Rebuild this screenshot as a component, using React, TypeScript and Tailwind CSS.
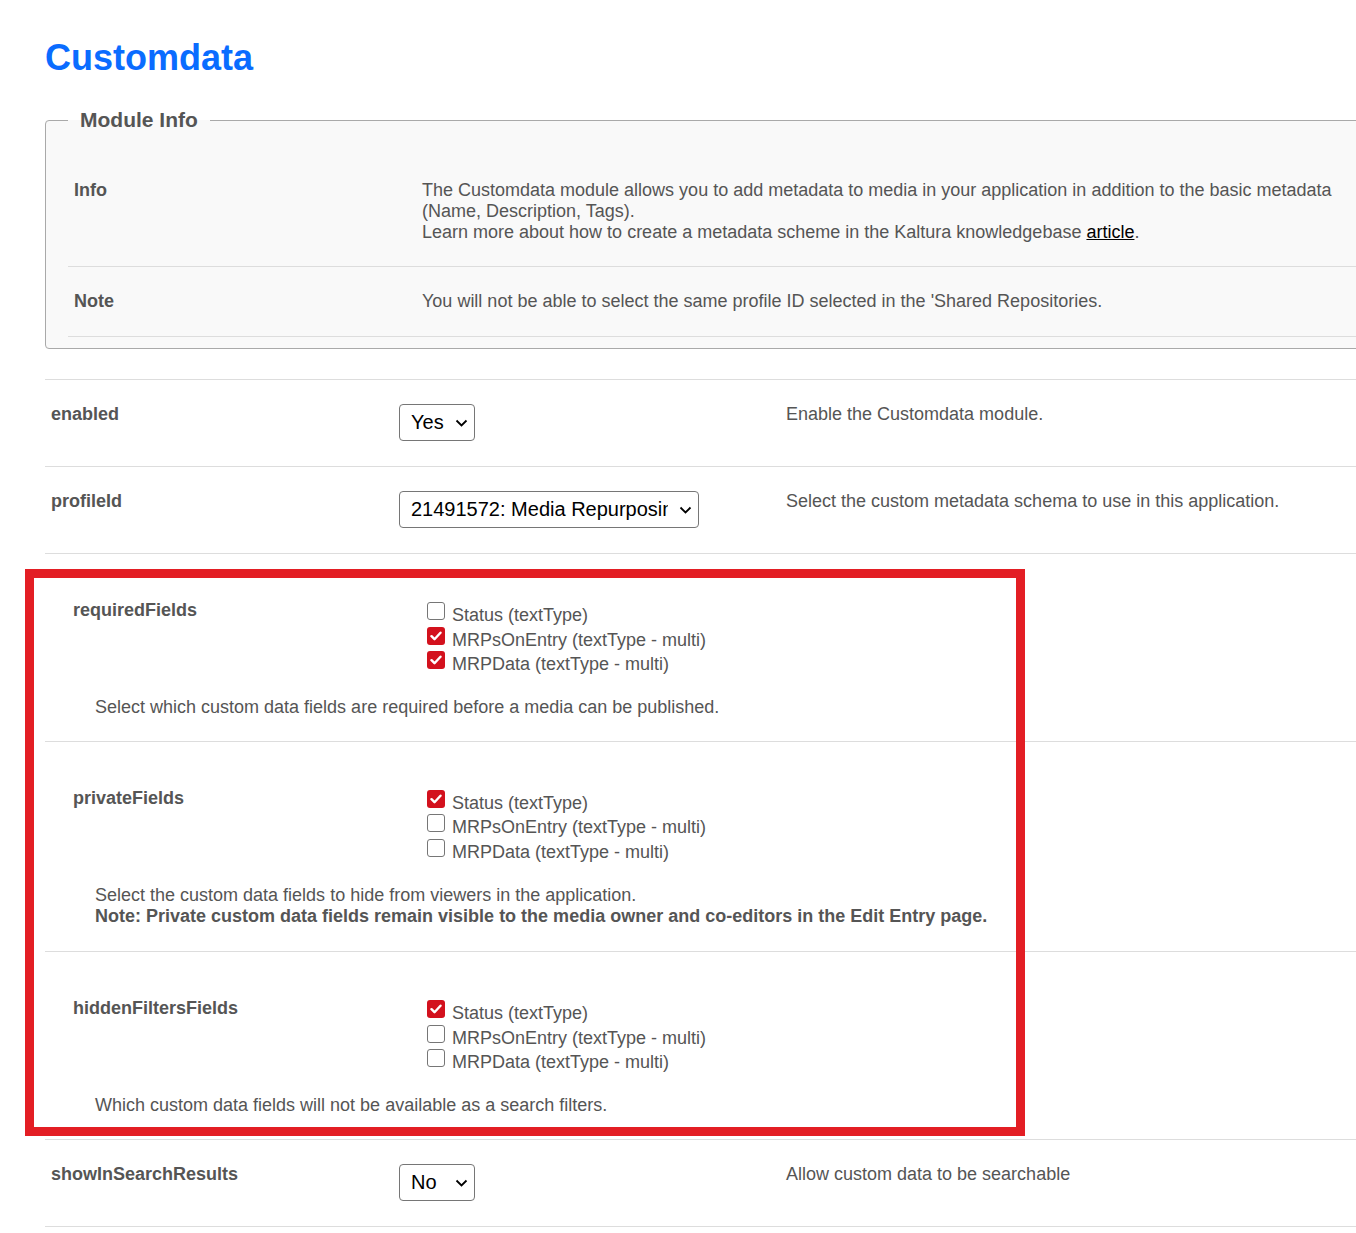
import type { ReactNode } from "react";

const fields = ["Status (textType)", "MRPsOnEntry (textType - multi)", "MRPData (textType - multi)"];

function Chevron() {
  return (
    <svg width="13" height="8" viewBox="0 0 13 8" className="pointer-events-none absolute right-[7px] top-[15px]">
      <path d="M1.5 1.5l5 5 5-5" fill="none" stroke="#000" strokeWidth="1.8" />
    </svg>
  );
}

function Select({ value, options, width }: { value: string; options: string[]; width: string }) {
  return (
    <div className={"relative " + width}>
      <select
        defaultValue={value}
        className="h-[37px] w-full appearance-none rounded-[4px] border border-[#767676] bg-white pl-[11px] pr-[30px] text-[20px] leading-[23px] text-black"
      >
        {options.map((o) => (
          <option key={o}>{o}</option>
        ))}
      </select>
      <Chevron />
    </div>
  );
}

function Box({ checked }: { checked: boolean }) {
  if (checked) {
    return (
      <span className="mt-[-1px] flex h-[18px] w-[18px] shrink-0 items-center justify-center rounded-[3px] bg-[#d3111d]">
        <svg width="12" height="10" viewBox="0 0 12 10">
          <path d="M1.5 5.2l3 3 6-6.5" fill="none" stroke="#fff" strokeWidth="2.4" strokeLinecap="round" strokeLinejoin="round" />
        </svg>
      </span>
    );
  }
  return <span className="mt-[-1px] h-[18px] w-[18px] shrink-0 rounded-[3px] border border-[#767676] bg-white" />;
}

function SettingRow({ label, desc, children }: { label: string; desc: string; children: ReactNode }) {
  return (
    <div className="flex border-b border-[#dddddd] pt-[24px] pb-[25px]">
      <div className="w-[354px] shrink-0 pl-[6px] font-bold">{label}</div>
      <div className="w-[387px] shrink-0">{children}</div>
      <div className="flex-1">{desc}</div>
    </div>
  );
}

function FieldRow({ label, checked, wide, children }: { label: string; checked: boolean[]; wide?: boolean; children: ReactNode }) {
  return (
    <div className={"border-b border-[#dddddd] pt-[46px] " + (wide ? "pb-[24px]" : "pb-[23px]")}>
      <div className="flex">
        <div className="w-[382px] shrink-0 pl-[28px] font-bold">{label}</div>
        <div className="pt-[3px]">
          {fields.map((f, i) => (
            <label key={f} className="flex h-[24.5px] items-start gap-[7px]">
              <Box checked={checked[i]} />
              <span className="leading-[24.5px]">{f}</span>
            </label>
          ))}
        </div>
      </div>
      <div className={"pl-[50px] " + (wide ? "mt-[21px]" : "mt-[20px]")}>{children}</div>
    </div>
  );
}

export default function App() {
  return (
    <div className="min-h-[1233px] overflow-hidden bg-white pl-[45px] pt-[37px] pb-[10px] font-['Liberation_Sans',Arial,sans-serif] text-[18px] leading-[21px] text-[#555555]">
      <h1 className="text-[36px] font-bold leading-[41px] text-[#0a6cff]">Customdata</h1>

      {/* Module Info */}
      <fieldset className="mt-[30px] w-[1340px] rounded-[4px] border border-[#a9a9a9] bg-[#f9f9f9] pl-[22px] pt-[24px] pb-[11px]">
        <legend className="px-[12px] text-[21px] font-bold leading-[24px] text-[#555555]">Module Info</legend>
        <div className="flex border-b border-[#dddddd] pt-[24px] pb-[23px]">
          <div className="w-[354px] shrink-0 pl-[6px] font-bold">Info</div>
          <div className="max-w-[928px]">
            The Customdata module allows you to add metadata to media in your application in addition to the basic metadata (Name, Description, Tags).
            <br />
            Learn more about how to create a metadata scheme in the Kaltura knowledgebase{" "}
            <a href="#" className="text-black underline">
              article
            </a>
            .
          </div>
        </div>
        <div className="flex border-b border-[#dddddd] pt-[24px] pb-[24px]">
          <div className="w-[354px] shrink-0 pl-[6px] font-bold">Note</div>
          <div>You will not be able to select the same profile ID selected in the 'Shared Repositories.</div>
        </div>
      </fieldset>

      <div className="mt-[30px] border-t border-[#dddddd]">
        <SettingRow label="enabled" desc="Enable the Customdata module.">
          <Select value="Yes" options={["Yes", "No"]} width="w-[76px]" />
        </SettingRow>
        <SettingRow label="profileId" desc="Select the custom metadata schema to use in this application.">
          <Select value="21491572: Media Repurposing" options={["21491572: Media Repurposing"]} width="w-[300px]" />
        </SettingRow>

        <div className="relative">
          <FieldRow label="requiredFields" checked={[false, true, true]}>
            Select which custom data fields are required before a media can be published.
          </FieldRow>
          <FieldRow label="privateFields" checked={[true, false, false]} wide>
            Select the custom data fields to hide from viewers in the application.
            <br />
            <b>Note: Private custom data fields remain visible to the media owner and co-editors in the Edit Entry page.</b>
          </FieldRow>
          <FieldRow label="hiddenFiltersFields" checked={[true, false, false]}>
            Which custom data fields will not be available as a search filters.
          </FieldRow>
          {/* highlight annotation */}
          <div className="pointer-events-none absolute left-[-20px] top-[15px] h-[567px] w-[1000px] border-[9px] border-[#e31e24]" />
        </div>

        <SettingRow label="showInSearchResults" desc="Allow custom data to be searchable">
          <Select value="No" options={["Yes", "No"]} width="w-[76px]" />
        </SettingRow>
      </div>
    </div>
  );
}
